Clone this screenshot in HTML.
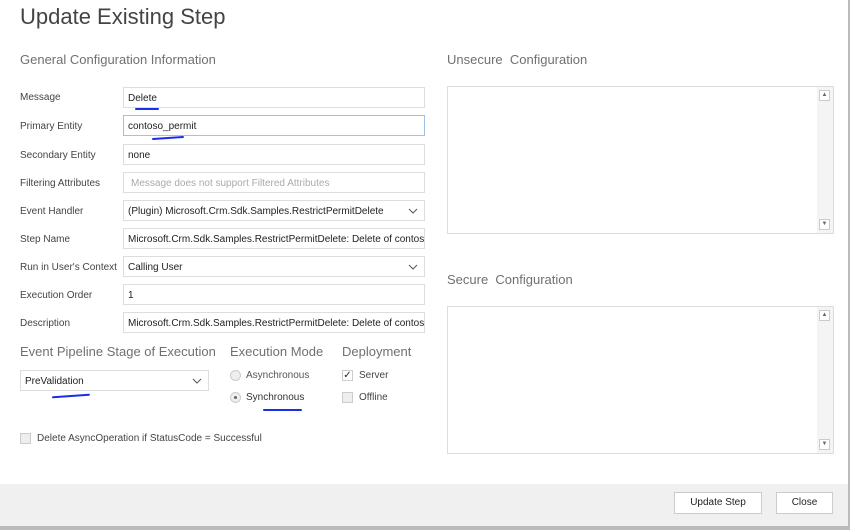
<!DOCTYPE html>
<html><head><meta charset="utf-8"><style>
*{box-sizing:border-box;margin:0;padding:0}
body{width:850px;height:530px;background:#fff;font-family:"Liberation Sans",sans-serif;color:#444;position:relative;overflow:hidden}
.a{position:absolute}
.lbl{font-size:10px;color:#444}
.inp{position:absolute;left:123px;width:302px;height:21px;border:1px solid #ddd;font-size:10px;color:#222;padding:5px 4px;white-space:nowrap;overflow:hidden}
.chev{position:absolute;right:6px;top:7px;width:10px;height:6px}
.h{font-size:13px;color:#707070}
.ta{position:absolute;left:447px;width:387px;height:148px;border:1px solid #ddd}
.sb{position:absolute;right:0;top:0;width:16px;height:100%;background:#f4f4f4}
.sb i{position:absolute;left:2px;width:11px;height:11px;border:1px solid #ccc;background:#fff;font-size:6px;text-align:center;line-height:9px;font-style:normal;color:#666}
.btn{position:absolute;top:492px;height:22px;border:1px solid #ccc;background:#fff;font-size:10px;color:#222;text-align:center;line-height:20px}
.blue{position:absolute;height:2px;background:#1a2ee8;border-radius:1px}
.cb{position:absolute;width:11px;height:11px;border:1px solid #ccc;background:#eee}
.rd{position:absolute;width:11px;height:11px;border-radius:50%;border:1px solid #ccc;background:#eee}
</style></head><body>
<div class="a" style="left:20px;top:4px;font-size:22px;color:#444">Update Existing Step</div>
<div class="a h" style="left:20px;top:52px">General Configuration Information</div>
<div class="a h" style="left:447px;top:52px">Unsecure&nbsp; Configuration</div>
<div class="a h" style="left:447px;top:272px">Secure&nbsp; Configuration</div>

<div class="a lbl" style="left:20px;top:92px">Message</div><div class="inp" style="top:87px">Delete</div>
<div class="a lbl" style="left:20px;top:121px">Primary Entity</div><div class="inp" style="top:115px;border-color:#9fc3e8">contoso_permit</div>
<div class="a lbl" style="left:20px;top:150px">Secondary Entity</div><div class="inp" style="top:144px">none</div>
<div class="a lbl" style="left:20px;top:178px">Filtering Attributes</div><div class="inp" style="top:172px;color:#aaa;padding-left:7px">Message does not support Filtered Attributes</div>
<div class="a lbl" style="left:20px;top:206px">Event Handler</div><div class="inp" style="top:200px">(Plugin) Microsoft.Crm.Sdk.Samples.RestrictPermitDelete<svg class="chev" viewBox="0 0 10 6"><path d="M1 1L5 5L9 1" fill="none" stroke="#555" stroke-width="1"/></svg></div>
<div class="a lbl" style="left:20px;top:234px">Step Name</div><div class="inp" style="top:228px">Microsoft.Crm.Sdk.Samples.RestrictPermitDelete: Delete of contoso_permit</div>
<div class="a lbl" style="left:20px;top:262px">Run in User's Context</div><div class="inp" style="top:256px">Calling User<svg class="chev" viewBox="0 0 10 6"><path d="M1 1L5 5L9 1" fill="none" stroke="#555" stroke-width="1"/></svg></div>
<div class="a lbl" style="left:20px;top:290px">Execution Order</div><div class="inp" style="top:284px">1</div>
<div class="a lbl" style="left:20px;top:318px">Description</div><div class="inp" style="top:312px">Microsoft.Crm.Sdk.Samples.RestrictPermitDelete: Delete of contoso_permit</div>

<div class="blue" style="left:135px;top:108px;width:24px"></div>
<div class="blue" style="left:152px;top:137px;width:32px;transform:rotate(-4deg)"></div>

<div class="a h" style="left:20px;top:344px">Event Pipeline Stage of Execution</div>
<div class="a h" style="left:230px;top:344px">Execution Mode</div>
<div class="a h" style="left:342px;top:344px">Deployment</div>
<div class="inp" style="left:20px;top:370px;width:189px">PreValidation<svg class="chev" viewBox="0 0 10 6"><path d="M1 1L5 5L9 1" fill="none" stroke="#555" stroke-width="1"/></svg></div>
<div class="blue" style="left:52px;top:395px;width:38px;transform:rotate(-4deg)"></div>
<div class="rd" style="left:230px;top:370px"></div><div class="a lbl" style="left:246px;top:370px;color:#555">Asynchronous</div>
<div class="rd" style="left:230px;top:392px"><div style="position:absolute;left:3px;top:3px;width:3px;height:3px;border-radius:50%;background:#666"></div></div><div class="a lbl" style="left:246px;top:392px;color:#333">Synchronous</div>
<div class="blue" style="left:263px;top:409px;width:39px"></div>
<div class="cb" style="left:342px;top:370px;background:#fff;font-size:10px;line-height:9px;text-align:center;color:#222">&#10003;</div><div class="a lbl" style="left:359px;top:370px">Server</div>
<div class="cb" style="left:342px;top:392px"></div><div class="a lbl" style="left:359px;top:392px">Offline</div>
<div class="cb" style="left:20px;top:433px"></div><div class="a lbl" style="left:37px;top:433px">Delete AsyncOperation if StatusCode = Successful</div>

<div class="ta" style="top:86px"><div class="sb"><i style="top:3px">&#9650;</i><i style="top:132px">&#9660;</i></div></div>
<div class="ta" style="top:306px"><div class="sb"><i style="top:3px">&#9650;</i><i style="top:132px">&#9660;</i></div></div>

<div class="a" style="left:0;top:484px;width:848px;height:42px;background:#f0f0f0"></div>
<div class="a" style="left:0;top:526px;width:850px;height:4px;background:#bbb"></div>
<div class="a" style="left:848px;top:0;width:2px;height:530px;background:#bbb"></div>
<div class="btn" style="left:674px;width:88px">Update Step</div>
<div class="btn" style="left:776px;width:57px">Close</div>
</body></html>
